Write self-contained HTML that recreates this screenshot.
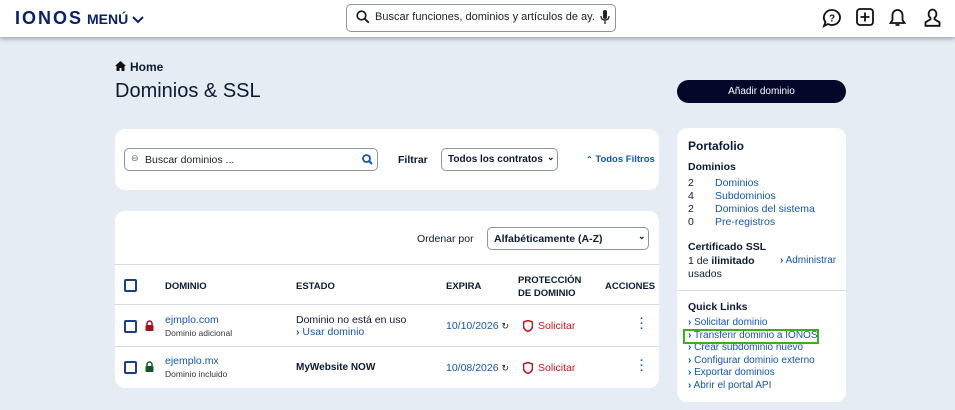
<!DOCTYPE html>
<html><head><meta charset="utf-8"><style>
*{box-sizing:border-box;margin:0;padding:0}
body{width:955px;height:410px;background:#e5ecf3;font-family:"Liberation Sans",sans-serif;color:#0b1a33;position:relative;overflow:hidden;font-size:11px}
.a{position:absolute;white-space:nowrap}
.hdr{position:absolute;left:0;top:0;width:955px;height:37px;background:#fff;box-shadow:0 2px 4px rgba(0,0,0,.3)}
.card{position:absolute;background:#fff;border-radius:10px}
.blue{color:#1456b0}
.b{font-weight:bold}
.red{color:#c0161d}
.cb{position:absolute;width:13px;height:13px;border:2px solid #1c3f84;border-radius:2px}
.line{position:absolute;height:1px;background:#d3dbe4}
.sel{position:absolute;border:1px solid #8a96a6;border-radius:5px;background:#fff}
</style></head><body>
<div class="hdr"></div>
<div class="a b" style="left:15px;top:8px;font-size:18px;letter-spacing:2px;color:#0b2160">IONOS</div>
<div class="a b" style="left:87px;top:11px;font-size:14px;color:#0b2160">MENÚ <svg width="12" height="8" viewBox="0 0 12 8"><path d="M1 1l5 5 5-5" stroke="#0b2160" stroke-width="2" fill="none"/></svg></div>
<div class="a" style="left:346px;top:4px;width:270px;height:28px;border:1px solid #8a96a6;border-radius:5px"></div>
<svg class="a" style="left:356px;top:10px" width="14" height="14" viewBox="0 0 14 14"><circle cx="5.5" cy="5.5" r="4.3" stroke="#111" stroke-width="1.6" fill="none"/><path d="M8.8 8.8l4 4" stroke="#111" stroke-width="1.8"/></svg>
<div class="a" style="left:375px;top:11px;font-size:11px;color:#222;width:220px;overflow:hidden">Buscar funciones, dominios y artículos de ay...</div>
<svg class="a" style="left:600px;top:10px" width="10" height="15" viewBox="0 0 10 15"><rect x="3" y="0" width="4" height="9" rx="2" fill="#222"/><path d="M1 6q0 4 4 4t4-4M5 10v4" stroke="#222" stroke-width="1.3" fill="none"/></svg>
<svg class="a" style="left:822px;top:8px" width="20" height="20" viewBox="0 0 20 20"><path d="M10 2a8 7.5 0 1 1-4 14l-4 2 1.5-4A8 7.5 0 0 1 10 2z" stroke="#111" stroke-width="1.8" fill="none"/><text x="10" y="13.5" font-size="10" font-weight="bold" text-anchor="middle" fill="#111" font-family="Liberation Sans">?</text></svg>
<svg class="a" style="left:856px;top:8px" width="18" height="18" viewBox="0 0 18 18"><rect x="1" y="1" width="16" height="16" rx="3" stroke="#111" stroke-width="1.8" fill="none"/><path d="M9 4.5v9M4.5 9h9" stroke="#111" stroke-width="1.8"/></svg>
<svg class="a" style="left:889px;top:8px" width="17" height="19" viewBox="0 0 17 19"><path d="M8.5 2a5 5 0 0 0-5 5v5l-2 3h14l-2-3V7a5 5 0 0 0-5-5zM6.5 17h4" stroke="#111" stroke-width="1.8" fill="none"/></svg>
<svg class="a" style="left:924px;top:8px" width="17" height="19" viewBox="0 0 17 19"><path d="M8.5 1.5a4 4.5 0 0 1 2 8.3v1.5l5 3v3.5H1.5v-3.5l5-3V9.8a4 4.5 0 0 1 2-8.3z" stroke="#111" stroke-width="1.8" fill="none"/></svg>

<svg class="a" style="left:115px;top:61px" width="11" height="10" viewBox="0 0 11 10"><path d="M5.5 0L0 5h1.5v5h3V7h2v3h3V5H11z" fill="#111"/></svg>
<div class="a b" style="left:130px;top:60px;font-size:12px">Home</div>
<div class="a" style="left:115px;top:80px;font-size:20px;color:#0b1a33">Dominios &amp; SSL</div>
<div class="a" style="left:677px;top:80px;width:169px;height:23px;background:#03082a;border-radius:12px;color:#fff;font-size:10px;text-align:center;line-height:23px">Añadir dominio</div>

<div class="card" style="left:115px;top:129px;width:544px;height:61px"></div>
<div class="a" style="left:124px;top:148px;width:254px;height:23px;border:1px solid #8a96a6;border-radius:5px"></div>
<div class="a" style="left:131px;top:153px;font-size:9px;color:#666">⊖</div>
<div class="a" style="left:145px;top:154px;font-size:10.5px;color:#222">Buscar dominios ...</div>
<svg class="a" style="left:362px;top:154px" width="11" height="11" viewBox="0 0 11 11"><circle cx="4.5" cy="4.5" r="3.5" stroke="#1456b0" stroke-width="1.8" fill="none"/><path d="M7 7l3 3" stroke="#1456b0" stroke-width="2"/></svg>
<div class="a b" style="left:398px;top:154px;font-size:10.5px">Filtrar</div>
<div class="sel" style="left:441px;top:148px;width:117px;height:23px"></div>
<div class="a b" style="left:448px;top:154px;font-size:10px">Todos los contratos</div>
<div class="a b" style="left:547px;top:152px;font-size:9px">⌄</div>
<div class="a b blue" style="left:586px;top:154px;font-size:9.5px"><span style="font-size:8px">⌃</span> Todos Filtros</div>

<div class="card" style="left:115px;top:211px;width:544px;height:177px"></div>
<div class="a" style="left:417px;top:233px;font-size:10.5px">Ordenar por</div>
<div class="sel" style="left:487px;top:227px;width:162px;height:23px"></div>
<div class="a b" style="left:494px;top:233px;font-size:10.5px">Alfabéticamente (A-Z)</div>
<div class="a b" style="left:638px;top:231px;font-size:9px">⌄</div>
<div class="line" style="left:115px;top:264px;width:544px"></div>
<div class="cb" style="left:124px;top:279px"></div>
<div class="a b" style="left:165px;top:281px;font-size:9.5px">DOMINIO</div>
<div class="a b" style="left:296px;top:281px;font-size:9.5px">ESTADO</div>
<div class="a b" style="left:446px;top:281px;font-size:9.5px">EXPIRA</div>
<div class="a b" style="left:518px;top:274px;font-size:9.5px;line-height:13px">PROTECCIÓN<br>DE DOMINIO</div>
<div class="a b" style="left:605px;top:281px;font-size:9.5px">ACCIONES</div>
<div class="line" style="left:115px;top:304px;width:544px"></div>
<div class="line" style="left:115px;top:346px;width:544px"></div>

<div class="cb" style="left:124px;top:320px"></div>
<svg class="a" style="left:145px;top:320px" width="9" height="11" viewBox="0 0 9 11"><path d="M2 5V3.5a2.5 2.5 0 0 1 5 0V5" stroke="#a3111a" stroke-width="1.5" fill="none"/><rect x="0.5" y="5" width="8" height="6" rx="1" fill="#a3111a"/></svg>
<div class="a blue" style="left:165px;top:314px;font-size:10.5px">ejmplo.com</div>
<div class="a" style="left:165px;top:328px;font-size:8.5px;color:#333">Dominio adicional</div>
<div class="a" style="left:296px;top:314px;font-size:10.5px">Dominio no está en uso</div>
<div class="a blue" style="left:296px;top:326px;font-size:10.5px"><b>›</b> Usar dominio</div>
<div class="a blue" style="left:446px;top:320px;font-size:10.5px">10/10/2026 <span style="color:#222;font-size:9px">↻</span></div>
<svg class="a" style="left:523px;top:320px" width="10" height="12" viewBox="0 0 10 12"><path d="M5 .5L.5 2v4q0 3.5 4.5 5.5Q9.5 9.5 9.5 6V2z" stroke="#c0161d" stroke-width="1.6" fill="none"/></svg>
<div class="a red" style="left:538px;top:320px;font-size:10.5px">Solicitar</div>
<div class="a b blue" style="left:640px;top:317px;font-size:11px;line-height:5px">·<br>·<br>·</div>

<div class="cb" style="left:124px;top:361px"></div>
<svg class="a" style="left:145px;top:361px" width="9" height="11" viewBox="0 0 9 11"><path d="M2 5V3.5a2.5 2.5 0 0 1 5 0V5" stroke="#0e5a22" stroke-width="1.5" fill="none"/><rect x="0.5" y="5" width="8" height="6" rx="1" fill="#0e5a22"/></svg>
<div class="a blue" style="left:165px;top:355px;font-size:10.5px">ejemplo.mx</div>
<div class="a" style="left:165px;top:369px;font-size:8.5px;color:#333">Dominio incluido</div>
<div class="a b" style="left:296px;top:362px;font-size:10px">MyWebsite NOW</div>
<div class="a blue" style="left:446px;top:362px;font-size:10.5px">10/08/2026 <span style="color:#222;font-size:9px">↻</span></div>
<svg class="a" style="left:523px;top:362px" width="10" height="12" viewBox="0 0 10 12"><path d="M5 .5L.5 2v4q0 3.5 4.5 5.5Q9.5 9.5 9.5 6V2z" stroke="#c0161d" stroke-width="1.6" fill="none"/></svg>
<div class="a red" style="left:538px;top:362px;font-size:10.5px">Solicitar</div>
<div class="a b blue" style="left:640px;top:359px;font-size:11px;line-height:5px">·<br>·<br>·</div>

<div class="card" style="left:677px;top:128px;width:169px;height:274px"></div>
<div class="a b" style="left:688px;top:139px;font-size:12px">Portafolio</div>
<div class="a b" style="left:688px;top:161px;font-size:10.5px">Dominios</div>
<div class="a" style="left:688px;top:177px;font-size:10.5px;line-height:13px">2<br>4<br>2<br>0</div>
<div class="a blue" style="left:715px;top:177px;font-size:10.5px;line-height:13px">Dominios<br>Subdominios<br>Dominios del sistema<br>Pre-registros</div>
<div class="a b" style="left:688px;top:241px;font-size:10.5px">Certificado SSL</div>
<div class="a" style="left:688px;top:255px;font-size:10.5px;line-height:13px">1 de <b>ilimitado</b><br>usados</div>
<div class="a blue" style="left:780px;top:255px;font-size:10px"><b>›</b> Administrar</div>
<div class="line" style="left:677px;top:290px;width:169px"></div>
<div class="a b" style="left:688px;top:301px;font-size:10.5px">Quick Links</div>
<div class="a blue" style="left:688px;top:317px;font-size:10px;line-height:12.6px"><b>›</b> Solicitar dominio<br><b>›</b> Transferir dominio a IONOS<br><b>›</b> Crear subdominio nuevo<br><b>›</b> Configurar dominio externo<br><b>›</b> Exportar dominios<br><b>›</b> Abrir el portal API</div>
<div class="a" style="left:683px;top:329px;width:136px;height:15px;border:2px solid #3cb01c"></div>
</body></html>
